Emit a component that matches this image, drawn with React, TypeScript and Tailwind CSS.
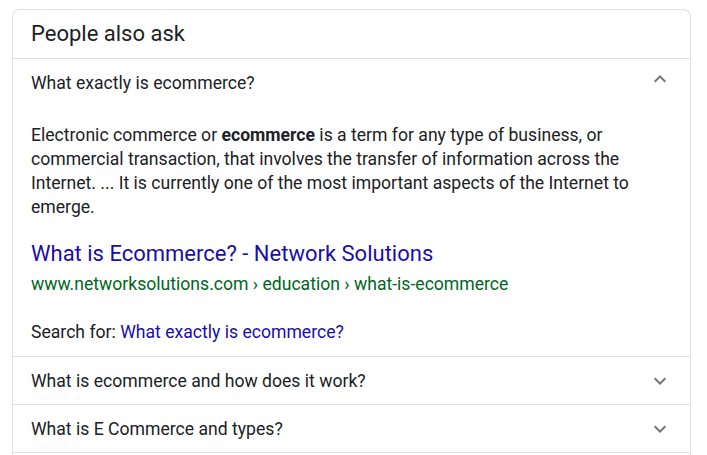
import React from "react";

const ChevronDown = () => (
  <svg width="24" height="24" viewBox="0 0 24 24" className="fill-[#70757a]">
    <path d="M16.59 8.59L12 13.17 7.41 8.59 6 10l6 6 6-6z" />
  </svg>
);

const ChevronUp = () => (
  <svg width="24" height="24" viewBox="0 0 24 24" className="fill-[#70757a]">
    <path d="M12 8l-6 6 1.41 1.41L12 10.83l4.59 4.58L18 14z" />
  </svg>
);

function Row({ q }: { q: string }) {
  return (
    <div className="flex h-[48px] items-center justify-between border-t border-[#dfe1e5] pl-[18px] pr-[18px]">
      <span className="text-[17.6px] leading-[24px] text-[#202124]">{q}</span>
      <ChevronDown />
    </div>
  );
}

export default function App() {
  return (
    <div className="min-h-[455px] bg-white pl-[12px] pt-[9px]" style={{ fontFamily: "Roboto, Arial, sans-serif" }}>
      <div className="w-[679px] rounded-t-[8px] border border-b-0 border-[#dfe1e5]">
        <div className="flex h-[48px] items-center pl-[18px]">
          <span className="text-[22px] leading-[28px] text-[#202124]">People also ask</span>
        </div>
        <div className="border-t border-[#dfe1e5]">
          <div className="flex h-[48px] items-center justify-between pl-[18px] pr-[18px]">
            <span className="text-[17.6px] leading-[24px] text-[#202124]">What exactly is ecommerce?</span>
            <div className="-mt-[8px]">
              <ChevronUp />
            </div>
          </div>
          <div className="pl-[18px] pt-[16px] pb-[12px]">
            <p className="w-[620px] text-[17.6px] leading-[24px] text-[#202124]">
              Electronic commerce or <b className="font-bold">ecommerce</b> is a term for any type of business, or
              commercial transaction, that involves the transfer of information across the Internet. ... It is
              currently one of the most important aspects of the Internet to emerge.
            </p>
            <div className="mt-[22px] text-[22px] leading-[26px] text-[#1a0dab]">What is Ecommerce? - Network Solutions</div>
            <div className="mt-[5px] text-[17.6px] leading-[24px] text-[#006621]">
              www.networksolutions.com › education › what-is-ecommerce
            </div>
            <div className="mt-[24px] text-[17.6px] leading-[24px] text-[#202124]">
              Search for: <span className="text-[#1a0dab]">What exactly is ecommerce?</span>
            </div>
          </div>
        </div>
        <Row q="What is ecommerce and how does it work?" />
        <Row q="What is E Commerce and types?" />
        <div className="h-[10px] border-t border-[#dfe1e5]" />
      </div>
    </div>
  );
}
